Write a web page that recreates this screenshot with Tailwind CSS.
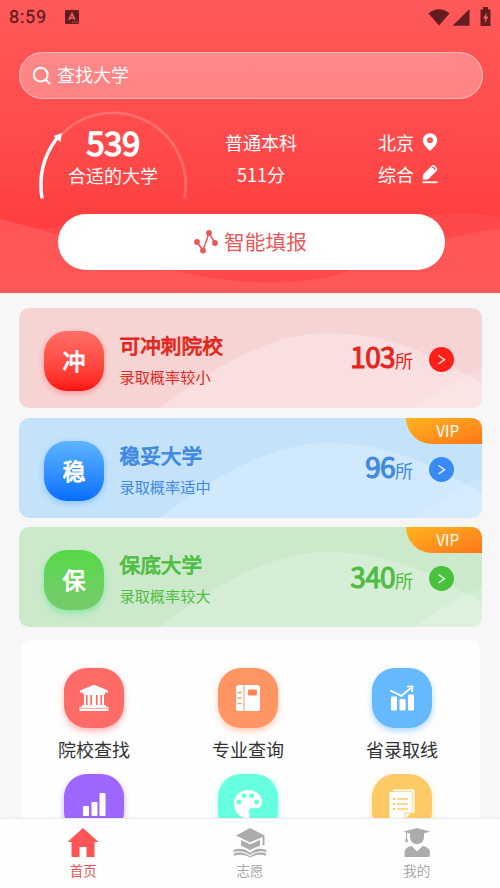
<!DOCTYPE html>
<html lang="zh-CN">
<head>
<meta charset="utf-8">
<meta name="viewport" content="width=device-width, initial-scale=1">
<title>首页</title>
<script src="https://cdn.jsdelivr.net/npm/@tailwindcss/browser@4"></script>
</head>
<body class="flex h-[888px] w-[500px] flex-col overflow-hidden bg-[#f7f7f7] font-['Noto_Sans_CJK_SC',sans-serif]">

<header class="relative h-[293px] shrink-0 bg-linear-to-b from-[#ff5959] via-[#ff4647] via-60% to-[#ff3f40] to-75% text-white">
  <!-- background waves -->
  <svg class="absolute inset-0" width="500" height="293" viewBox="0 0 500 293">
    <defs><linearGradient id="wave" x1="0" y1="0" x2="0" y2="1"><stop offset="0" stop-color="#fff" stop-opacity=".07"/><stop offset="1" stop-color="#fff" stop-opacity=".09"/></linearGradient></defs>
    <path d="M0 219 L35 228 Q46 231 62 225 L420 216 Q470 211 500 217 V293 H0Z" fill="#fff" fill-opacity=".05"/>
    <path d="M0 219 C75 237 130 262 180 272 Q260 290 330 277 C390 258 435 236 500 229 V293 H0Z" fill="url(#wave)"/>
  </svg>

  <div class="relative flex h-full flex-col">
    <!-- status bar -->
    <div class="flex h-[34px] shrink-0 items-center pl-[9px] pr-[9px] text-[#641c1f]">
      <span class="font-[Roboto,sans-serif] text-[18px] leading-none tracking-[0.8px] [-webkit-text-stroke:0.3px]">8:59</span>
      <svg class="ml-[18px]" width="14" height="14" viewBox="0 0 14 14"><rect width="14" height="14" rx="1.5" fill="currentColor"/><path d="M3.8 10 L7 3.5 L10 10 M5 8 H9" fill="none" stroke="#f06466" stroke-width="1.5"/><path d="M7 12.2H13" stroke="#f06466" stroke-width="1" stroke-dasharray="1.2 1.2"/></svg>
      <svg class="ml-auto -mt-[1px]" width="64" height="20" viewBox="0 0 64 20" fill="currentColor">
        <path d="M1.500 6.500 Q12 -1.800 22.500 6.500 L12 18.500Z"/>
        <path d="M42.500 2V18.700H25.500Z"/>
        <path d="M53.500 2.500H56V0H61V2.500H63.500V19H53.500Z"/>
        <path d="M60 5 L56 11.500H58.500L57.500 16.500L61.500 9.500H59Z" fill="#f86466"/>
      </svg>
    </div>

    <!-- search -->
    <div class="mt-[18px] ml-[19px] flex h-[47px] w-[464px] shrink-0 items-center rounded-full border border-white/45 bg-white/30 pl-[12px]">
      <svg width="20" height="20" viewBox="0 0 20 20" fill="none" stroke="#fff" stroke-width="2"><circle cx="8.700" cy="8.700" r="6.900"/><path d="M13.600 13.600L18 18"/></svg>
      <span class="ml-[5px] -mt-[4px] text-[18px] leading-6">查找大学</span>
    </div>

    <!-- score summary -->
    <div class="flex h-[115px] shrink-0">
      <div class="relative w-[226px] pt-[26px] text-center">
        <svg class="absolute top-0 left-0" width="226" height="115" viewBox="0 0 226 115" fill="none">
          <path d="M61 36 A72.500 72.500 0 0 1 184.500 99.500" stroke="#fff" stroke-opacity=".2" stroke-width="2.600"/>
          <path d="M42 99.500 Q36.500 66 57 39" stroke="#fff" stroke-width="3.500"/>
          <path d="M62 34 L53.500 37 L60.500 43Z" fill="#fff"/>
        </svg>
        <div class="text-[33px] leading-[34px] tracking-[-0.500px] [-webkit-text-stroke:1.300px]">539</div>
        <div class="mt-[4px] text-[18px] leading-6">合适的大学</div>
      </div>
      <div class="flex w-[70px] flex-col items-center gap-[8px] pt-[31px] text-[18px] leading-6 whitespace-nowrap">
        <div>普通本科</div>
        <div>511分</div>
      </div>
      <div class="ml-[82px] flex flex-col gap-[8px] pt-[31px] text-[18px] leading-6">
        <div class="flex items-center gap-[6.500px]">北京
          <svg width="18" height="20" viewBox="0 0 18 20"><path fill-rule="evenodd" fill="#fff" d="M9 1.200A7.200 7.200 0 0 0 1.800 8.400C1.800 12.500 6.500 16.500 9 19C11.500 16.500 16.200 12.500 16.200 8.400A7.200 7.200 0 0 0 9 1.200ZM9 5.300A2.900 2.900 0 1 1 9 11.100A2.900 2.900 0 1 1 9 5.300Z"/><circle cx="9" cy="8.200" r="1" fill="#fff" fill-opacity=".35"/></svg>
        </div>
        <div class="flex items-center gap-[6.500px]">综合
          <svg width="18" height="20" viewBox="0 0 18 20"><path fill="#fff" d="M1.500 15.500L2.500 10L10.500 2Q12 .5 13.500 1.500L15.800 4Q17 5.500 15.500 7L7.500 15Q6.500 15.800 5 15.800Z"/><path d="M11.200 3.300Q14 3.500 14.200 6" fill="none" stroke="#ff4547" stroke-width="1.100"/><path d="M1.500 18.300H16.500" stroke="#fff" stroke-width="1.800"/></svg>
        </div>
      </div>
    </div>

    <button class="ml-[58px] flex h-[56px] w-[387px] items-center justify-center rounded-full bg-white pr-[3px] pb-[2px] text-[#e7595a]">
      <svg width="26" height="26" viewBox="0 0 26 26" fill="currentColor"><path d="M4 14L10 22.500L16 5L22 15" fill="none" stroke="currentColor" stroke-width="1.500"/><circle cx="4" cy="14" r="2.900"/><circle cx="10" cy="22.500" r="2.900"/><circle cx="16" cy="5" r="2.900"/><circle cx="22" cy="15" r="2.900"/></svg>
      <span class="ml-[5px] text-[20.700px] leading-7">智能填报</span>
    </button>
  </div>
</header>

<main class="min-h-0 flex-1 overflow-hidden pt-[15px]">
  <div class="ml-[19.400px] flex w-[463px] flex-col gap-[9.800px]">
    <section class="relative flex h-[99.900px] items-center overflow-hidden rounded-[10px] bg-[#f7d4d4] text-[#e32720]">
      <svg class="absolute inset-0" width="463" height="100" viewBox="0 0 463 100"><path d="M141 100C200 55 255 25 308 25C365 25 415 45 463 76V100Z" fill="#fff" fill-opacity=".25"/><path d="M394 100C420 85 440 68 463 60V100Z" fill="#fff" fill-opacity=".18"/></svg>
      <div class="relative ml-[24.500px] mt-[6px] flex size-[60px] items-center justify-center rounded-[23px] bg-linear-to-b from-[#ff6e69] to-[#ff0d09] pb-[1px] text-[23px] leading-none text-white shadow-[0_2px_6px_rgba(255,60,50,0.4)] [-webkit-text-stroke:0.900px]">冲</div>
      <div class="relative ml-[15.600px] mt-[1px]">
        <h2 class="text-[20.700px] leading-[30px] [-webkit-text-stroke:0.900px]">可冲刺院校</h2>
        <p class="mt-[5px] text-[15.200px] leading-[22px]">录取概率较小</p>
      </div>
      <div class="relative ml-auto mb-[3px] flex items-baseline"><b class="text-[28px] leading-10 font-normal tracking-[-0.700px] [-webkit-text-stroke:1.100px]">103</b><span class="text-[18px]">所</span></div>
      <svg class="relative ml-[16px] mr-[28.500px] mt-[3px]" width="25" height="25" viewBox="0 0 25 25"><circle cx="12.500" cy="12.500" r="12.500" fill="#ff2019"/><path d="M9.500 8.500L15.500 12.700L9.500 17" fill="none" stroke="#ffe5e4" stroke-width="1.500"/></svg>
    </section>

    <section class="relative flex h-[99.900px] items-center overflow-hidden rounded-[10px] bg-[#c4e3fb] text-[#4188e2]">
      <svg class="absolute inset-0" width="463" height="100" viewBox="0 0 463 100"><path d="M141 100C200 55 255 25 308 25C365 25 415 45 463 76V100Z" fill="#fff" fill-opacity=".22"/><path d="M394 100C420 85 440 68 463 60V100Z" fill="#fff" fill-opacity=".12"/></svg>
      <div class="relative ml-[24.500px] mt-[6px] flex size-[60px] items-center justify-center rounded-[23px] bg-linear-to-b from-[#5db4ff] to-[#036dfe] pb-[1px] text-[23px] leading-none text-white shadow-[0_2px_6px_rgba(50,140,255,0.4)] [-webkit-text-stroke:0.900px]">稳</div>
      <div class="relative ml-[15.600px] mt-[1px]">
        <h2 class="text-[20.700px] leading-[30px] [-webkit-text-stroke:0.900px]">稳妥大学</h2>
        <p class="mt-[5px] text-[15.200px] leading-[22px]">录取概率适中</p>
      </div>
      <div class="relative ml-auto mb-[3px] flex items-baseline"><b class="text-[28px] leading-10 font-normal tracking-[-0.700px] [-webkit-text-stroke:1.100px]">96</b><span class="text-[18px]">所</span></div>
      <svg class="relative ml-[16px] mr-[28.500px] mt-[3px]" width="25" height="25" viewBox="0 0 25 25"><circle cx="12.500" cy="12.500" r="12.500" fill="#398af5"/><path d="M9.500 8.500L15.500 12.700L9.500 17" fill="none" stroke="#e5f0ff" stroke-width="1.500"/></svg>
      <div class="absolute top-0 right-0 h-[26px] w-[76.500px] rounded-bl-[26px] bg-linear-to-br from-[#ffb420] to-[#ff7519] pl-[7px] text-center text-[15.300px] leading-[25px] text-white">VIP</div>
    </section>

    <section class="relative flex h-[99.900px] items-center overflow-hidden rounded-[10px] bg-[#cceacb] text-[#4fbd42]">
      <svg class="absolute inset-0" width="463" height="100" viewBox="0 0 463 100"><path d="M141 100C200 55 255 25 308 25C365 25 415 45 463 76V100Z" fill="#fff" fill-opacity=".22"/><path d="M394 100C420 85 440 68 463 60V100Z" fill="#fff" fill-opacity=".18"/></svg>
      <div class="relative ml-[24.500px] mt-[6px] flex size-[60px] items-center justify-center rounded-[23px] bg-linear-to-b from-[#55d948] to-[#76cb6b] pb-[1px] text-[23px] leading-none text-white shadow-[0_3px_6px_rgba(80,230,140,0.55)] [-webkit-text-stroke:0.900px]">保</div>
      <div class="relative ml-[15.600px] mt-[1px]">
        <h2 class="text-[20.700px] leading-[30px] [-webkit-text-stroke:0.900px]">保底大学</h2>
        <p class="mt-[5px] text-[15.200px] leading-[22px]">录取概率较大</p>
      </div>
      <div class="relative ml-auto mb-[3px] flex items-baseline"><b class="text-[28px] leading-10 font-normal tracking-[-0.700px] [-webkit-text-stroke:1.100px]">340</b><span class="text-[18px]">所</span></div>
      <svg class="relative ml-[16px] mr-[28.500px] mt-[3px]" width="25" height="25" viewBox="0 0 25 25"><circle cx="12.500" cy="12.500" r="12.500" fill="#4ac13d"/><path d="M9.500 8.500L15.500 12.700L9.500 17" fill="none" stroke="#e5ffe5" stroke-width="1.500"/></svg>
      <div class="absolute top-0 right-0 h-[26px] w-[76.500px] rounded-bl-[26px] bg-linear-to-br from-[#ffb420] to-[#ff7519] pl-[7px] text-center text-[15.300px] leading-[25px] text-white">VIP</div>
    </section>
  </div>

  <div class="mt-[12.700px] ml-[21px] h-[300px] w-[459px] rounded-[10px] bg-[#fefefe] pt-[28px]">
    <div class="-ml-[4px] grid w-[462px] grid-cols-3 gap-y-[18px] text-[18px] leading-[28px] text-[#333]">
      <div class="flex h-[88.500px] flex-col items-center gap-[7px]">
        <div class="flex size-[60px] shrink-0 items-center justify-center rounded-[23px] bg-[#ff6b66] shadow-[0_3px_6px_rgba(255,107,102,0.5)]">
          <svg width="30" height="28" viewBox="0 0 30 28" fill="#fff"><path d="M15 .8L29 6.500V8.500H26V10.500H25V21H27V22.800H29.500V27H.5V22.800H3V21H5V10.500H4V8.500H1V6.500Z"/><path d="M7.800 11V21M12.200 11V21M17.800 11V21M22.200 11V21" stroke="#ff6b66" stroke-width="1.700"/><path d="M1 24.300H29" stroke="#ff6b66" stroke-width=".7"/></svg>
        </div>
        <span>院校查找</span>
      </div>
      <div class="flex h-[88.500px] flex-col items-center gap-[7px]">
        <div class="flex size-[60px] shrink-0 items-center justify-center rounded-[23px] bg-[#ff9563] shadow-[0_3px_6px_rgba(255,149,99,0.5)]">
          <svg width="26" height="28" viewBox="0 0 26 28"><rect x="1" y="1" width="24" height="26" rx="2.800" fill="#fff"/><g stroke="#ff9563"><path d="M9 1V27" stroke-width="1"/><path d="M2.500 8.500H6.500M2.500 14H6.500M2.500 19.500H6.500" stroke-width="1.400"/></g><rect x="13" y="5.500" width="9" height="6" rx="1" fill="#ff8550"/></svg>
        </div>
        <span>专业查询</span>
      </div>
      <div class="flex h-[88.500px] flex-col items-center gap-[7px]">
        <div class="flex size-[60px] shrink-0 items-center justify-center rounded-[23px] bg-[#66b8ff] shadow-[0_3px_6px_rgba(102,184,255,0.5)]">
          <svg width="26" height="28" viewBox="0 0 26 28" fill="#fff"><rect x="2" y="12.500" width="6" height="14" rx="1"/><rect x="10.500" y="15" width="6" height="11.500" rx="1"/><rect x="19" y="10.500" width="6" height="16" rx="1"/><path d="M1.500 6.500L12.500 11.800L22 3.800" fill="none" stroke="#fff" stroke-width="1.900"/><path d="M18 2.500L23.500 2.300L23 8" fill="none" stroke="#fff" stroke-width="1.700"/></svg>
        </div>
        <span>省录取线</span>
      </div>
      <div class="flex flex-col items-center">
        <div class="flex size-[60px] items-center justify-center rounded-[23px] bg-[#9c66ff] shadow-[0_3px_6px_rgba(156,102,255,0.5)]">
          <svg width="24" height="26" viewBox="0 0 24 26" fill="#fff"><rect x="1" y="15" width="6" height="10" rx="1"/><rect x="9.500" y="11" width="6" height="14" rx="1"/><rect x="17.500" y="2" width="6" height="23" rx="1"/></svg>
        </div>
      </div>
      <div class="flex flex-col items-center">
        <div class="flex size-[60px] items-center justify-center rounded-[23px] bg-[#66ffdf] shadow-[0_3px_6px_rgba(102,255,223,0.5)]">
          <svg width="30" height="30" viewBox="0 0 30 30"><path d="M15 1C7 1 1 7 1 15C1 23 7 29 14 29C18 29 17 26 16 24C15 21 17 19 20 19H24C27 19 29 17 29 13C29 6 23 1 15 1Z" fill="#fff"/><g fill="#66ffdf"><circle cx="6" cy="13" r="2.500"/><circle cx="11" cy="6.800" r="2.500"/><circle cx="18.500" cy="6.800" r="2.500"/><circle cx="23.500" cy="13" r="2.500"/></g></svg>
        </div>
      </div>
      <div class="flex flex-col items-center">
        <div class="flex size-[60px] items-center justify-center rounded-[23px] bg-[#ffca66] shadow-[0_3px_6px_rgba(255,202,102,0.5)]">
          <svg width="26" height="30" viewBox="0 0 26 30"><path d="M4 .5H25.500V24H4Z" fill="#fff"/><path d="M.5 3H22.800V23L17 29H.5Z" fill="#fff"/><path d="M3 2.600H23.200V23" fill="none" stroke="#ffca66" stroke-width=".8"/><g stroke="#ffca66" stroke-width="1.300"><path d="M8 10H19M8 15H19M8 20H19"/><path d="M4 10H6M4 15H6M4 20H6" stroke-width="2"/></g><path d="M16 29V24H23" fill="none" stroke="#ffca66"/></svg>
        </div>
      </div>
    </div>
  </div>
</main>

<nav class="relative grid h-[70px] shrink-0 grid-cols-3 border-t border-[#ececec] bg-[#fefefe] pt-[8px] text-[13.500px] leading-[20px] text-[#a9a9a9] shadow-[0_-1px_2px_rgba(0,0,0,0.03)]">
  <a class="flex flex-col items-center gap-[2px] text-[#e85556]">
    <svg width="32" height="31" viewBox="0 0 32 31" fill="#ff5455"><path d="M16 1L31.500 15H27.500V30H19.500V20H12.500V30H4.500V15H.5Z"/></svg>
    <span>首页</span>
  </a>
  <a class="flex flex-col items-center gap-[2px]">
    <svg width="34" height="31" viewBox="0 0 34 31" fill="#acacac"><path d="M17 1L31.500 8.500V18H29.500V10L17 15.500L3 8.500Z"/><path d="M8 13L17 17.300L27 13V18.500L17 23L8 18.500Z"/><path d="M.5 23C7 20.500 13 22 17 26C21 22 27 20.500 33.500 23V25C27 23 21 25 17 28C13 25 7 23 .5 25Z"/><path d="M1 26.300C7 24.500 13 26 17 29.500C21 26 27 24.500 33 26.300V28.700C27 27 21 28 17 30.500C13 28 7 27 1 28.700Z"/></svg>
    <span>志愿</span>
  </a>
  <a class="flex flex-col items-center gap-[2px]">
    <svg width="28" height="31" viewBox="0 0 28 31" fill="#acacac"><path d="M14 1L27 4.500L21 6.500V10A7 7.300 0 0 1 7 10V6.500L4 5.800V10L5 15H2L3 10V5.500L1 4.500Z"/><path d="M1.500 30V26C1.500 22 4 19.500 8.500 19L14 24.500L19.500 19C24 19.500 27 22 27 26V28Q27 30 25 30Z"/></svg>
    <span>我的</span>
  </a>
</nav>
</body>
</html>
